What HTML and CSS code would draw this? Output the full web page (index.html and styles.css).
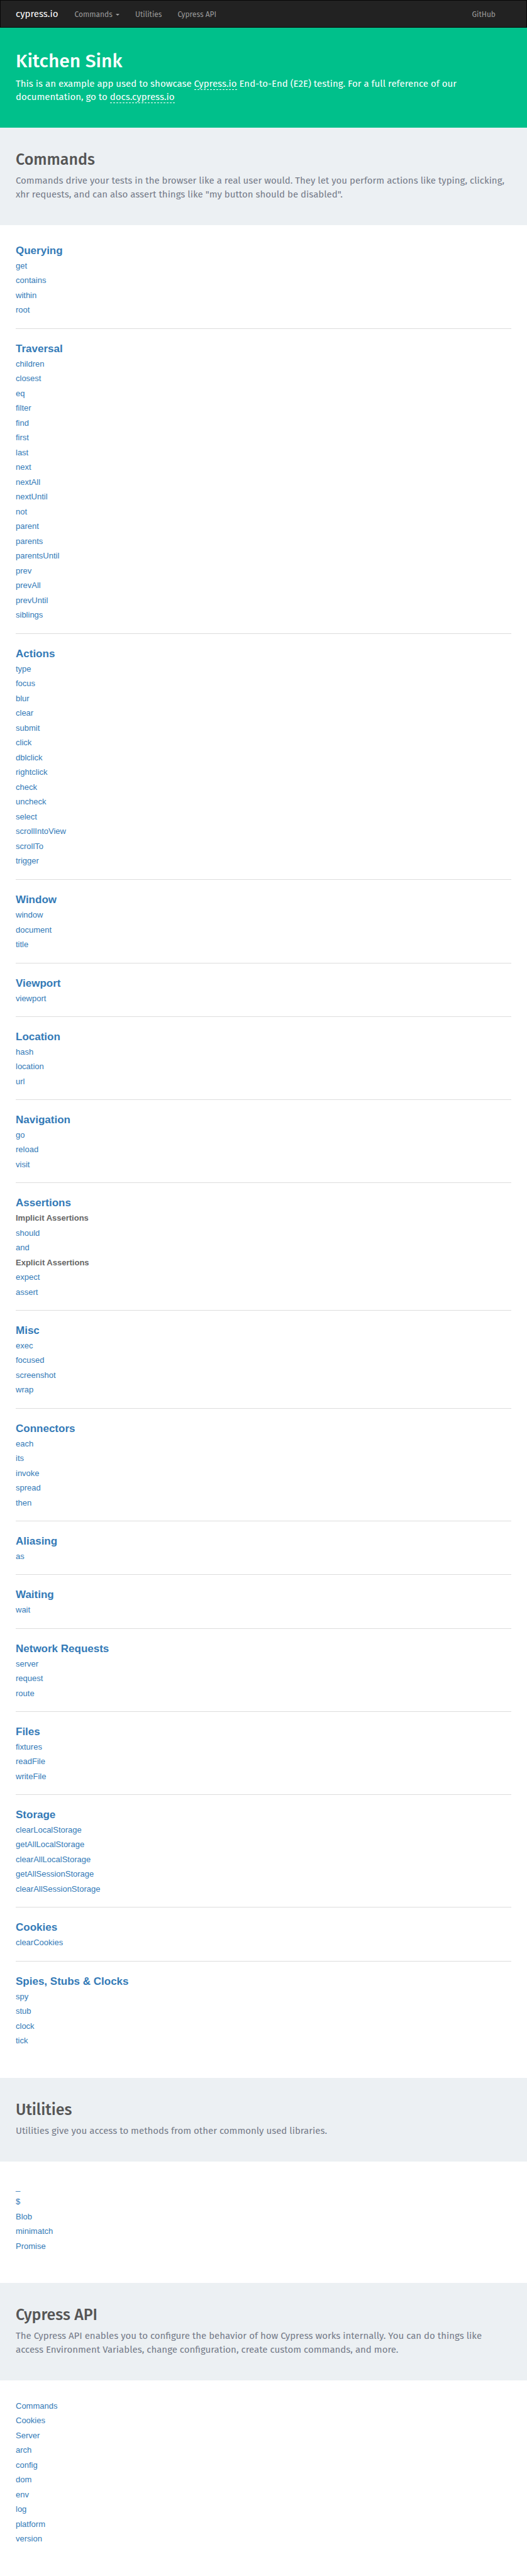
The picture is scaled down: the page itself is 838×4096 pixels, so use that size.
FILE: index.html
```html
<!DOCTYPE html>
<html lang="en">
<head>
<meta charset="utf-8">
<title>Cypress.io: Kitchen Sink</title>
<link rel="stylesheet" href="styles.css">
</head>
<body>
<nav class="navbar">
  <a class="brand" href="#">cypress.io</a>
  <ul class="nav-links">
    <li><a href="#commands">Commands <span class="caret"></span></a></li>
    <li><a href="#utilities">Utilities</a></li>
    <li><a href="#api">Cypress API</a></li>
  </ul>
  <ul class="nav-links nav-right">
    <li><a href="#">GitHub</a></li>
  </ul>
</nav>

<header class="banner hero">
  <h1>Kitchen Sink</h1>
  <p>This is an example app used to showcase <a href="#">Cypress.io</a> End-to-End (E2E) testing. For a full reference of our documentation, go to <a href="#">docs.cypress.io</a></p>
</header>

<main>
  <div class="banner" id="commands">
    <h2>Commands</h2>
    <p>Commands drive your tests in the browser like a real user would. They let you perform actions like typing, clicking, xhr requests, and can also assert things like "my button should be disabled".</p>
  </div>
  <div class="listing">
    <section class="group">
      <h3><a href="#">Querying</a></h3>
      <ul>
        <li><a href="#">get</a></li>
        <li><a href="#">contains</a></li>
        <li><a href="#">within</a></li>
        <li><a href="#">root</a></li>
      </ul>
    </section>
    <section class="group">
      <h3><a href="#">Traversal</a></h3>
      <ul>
        <li><a href="#">children</a></li>
        <li><a href="#">closest</a></li>
        <li><a href="#">eq</a></li>
        <li><a href="#">filter</a></li>
        <li><a href="#">find</a></li>
        <li><a href="#">first</a></li>
        <li><a href="#">last</a></li>
        <li><a href="#">next</a></li>
        <li><a href="#">nextAll</a></li>
        <li><a href="#">nextUntil</a></li>
        <li><a href="#">not</a></li>
        <li><a href="#">parent</a></li>
        <li><a href="#">parents</a></li>
        <li><a href="#">parentsUntil</a></li>
        <li><a href="#">prev</a></li>
        <li><a href="#">prevAll</a></li>
        <li><a href="#">prevUntil</a></li>
        <li><a href="#">siblings</a></li>
      </ul>
    </section>
    <section class="group">
      <h3><a href="#">Actions</a></h3>
      <ul>
        <li><a href="#">type</a></li>
        <li><a href="#">focus</a></li>
        <li><a href="#">blur</a></li>
        <li><a href="#">clear</a></li>
        <li><a href="#">submit</a></li>
        <li><a href="#">click</a></li>
        <li><a href="#">dblclick</a></li>
        <li><a href="#">rightclick</a></li>
        <li><a href="#">check</a></li>
        <li><a href="#">uncheck</a></li>
        <li><a href="#">select</a></li>
        <li><a href="#">scrollIntoView</a></li>
        <li><a href="#">scrollTo</a></li>
        <li><a href="#">trigger</a></li>
      </ul>
    </section>
    <section class="group">
      <h3><a href="#">Window</a></h3>
      <ul>
        <li><a href="#">window</a></li>
        <li><a href="#">document</a></li>
        <li><a href="#">title</a></li>
      </ul>
    </section>
    <section class="group">
      <h3><a href="#">Viewport</a></h3>
      <ul>
        <li><a href="#">viewport</a></li>
      </ul>
    </section>
    <section class="group">
      <h3><a href="#">Location</a></h3>
      <ul>
        <li><a href="#">hash</a></li>
        <li><a href="#">location</a></li>
        <li><a href="#">url</a></li>
      </ul>
    </section>
    <section class="group">
      <h3><a href="#">Navigation</a></h3>
      <ul>
        <li><a href="#">go</a></li>
        <li><a href="#">reload</a></li>
        <li><a href="#">visit</a></li>
      </ul>
    </section>
    <section class="group">
      <h3><a href="#">Assertions</a></h3>
      <ul>
        <li class="label">Implicit Assertions</li>
        <li><a href="#">should</a></li>
        <li><a href="#">and</a></li>
        <li class="label">Explicit Assertions</li>
        <li><a href="#">expect</a></li>
        <li><a href="#">assert</a></li>
      </ul>
    </section>
    <section class="group">
      <h3><a href="#">Misc</a></h3>
      <ul>
        <li><a href="#">exec</a></li>
        <li><a href="#">focused</a></li>
        <li><a href="#">screenshot</a></li>
        <li><a href="#">wrap</a></li>
      </ul>
    </section>
    <section class="group">
      <h3><a href="#">Connectors</a></h3>
      <ul>
        <li><a href="#">each</a></li>
        <li><a href="#">its</a></li>
        <li><a href="#">invoke</a></li>
        <li><a href="#">spread</a></li>
        <li><a href="#">then</a></li>
      </ul>
    </section>
    <section class="group">
      <h3><a href="#">Aliasing</a></h3>
      <ul>
        <li><a href="#">as</a></li>
      </ul>
    </section>
    <section class="group">
      <h3><a href="#">Waiting</a></h3>
      <ul>
        <li><a href="#">wait</a></li>
      </ul>
    </section>
    <section class="group">
      <h3><a href="#">Network Requests</a></h3>
      <ul>
        <li><a href="#">server</a></li>
        <li><a href="#">request</a></li>
        <li><a href="#">route</a></li>
      </ul>
    </section>
    <section class="group">
      <h3><a href="#">Files</a></h3>
      <ul>
        <li><a href="#">fixtures</a></li>
        <li><a href="#">readFile</a></li>
        <li><a href="#">writeFile</a></li>
      </ul>
    </section>
    <section class="group">
      <h3><a href="#">Storage</a></h3>
      <ul>
        <li><a href="#">clearLocalStorage</a></li>
        <li><a href="#">getAllLocalStorage</a></li>
        <li><a href="#">clearAllLocalStorage</a></li>
        <li><a href="#">getAllSessionStorage</a></li>
        <li><a href="#">clearAllSessionStorage</a></li>
      </ul>
    </section>
    <section class="group">
      <h3><a href="#">Cookies</a></h3>
      <ul>
        <li><a href="#">clearCookies</a></li>
      </ul>
    </section>
    <section class="group">
      <h3><a href="#">Spies, Stubs &amp; Clocks</a></h3>
      <ul>
        <li><a href="#">spy</a></li>
        <li><a href="#">stub</a></li>
        <li><a href="#">clock</a></li>
        <li><a href="#">tick</a></li>
      </ul>
    </section>
  </div>

  <div class="banner" id="utilities">
    <h2>Utilities</h2>
    <p>Utilities give you access to methods from other commonly used libraries.</p>
  </div>
  <div class="listing">
    <ul>
      <li><a href="#">_</a></li>
      <li><a href="#">$</a></li>
      <li><a href="#">Blob</a></li>
      <li><a href="#">minimatch</a></li>
      <li><a href="#">Promise</a></li>
    </ul>
  </div>

  <div class="banner" id="api">
    <h2>Cypress API</h2>
    <p>The Cypress API enables you to configure the behavior of how Cypress works internally. You can do things like access Environment Variables, change configuration, create custom commands, and more.</p>
  </div>
  <div class="listing">
    <ul>
      <li><a href="#">Commands</a></li>
      <li><a href="#">Cookies</a></li>
      <li><a href="#">Server</a></li>
      <li><a href="#">arch</a></li>
      <li><a href="#">config</a></li>
      <li><a href="#">dom</a></li>
      <li><a href="#">env</a></li>
      <li><a href="#">log</a></li>
      <li><a href="#">platform</a></li>
      <li><a href="#">version</a></li>
    </ul>
  </div>
</main>
</body>
</html>
```
FILE: styles.css
```css
* {
  box-sizing: border-box;
}

body {
  margin: 0;
  background: #fff;
  color: #666;
  font-family: "Liberation Sans", Arial, sans-serif;
  font-size: 13px;
}

a {
  color: #337ab7;
  text-decoration: none;
}

ul {
  margin: 0;
  padding: 0;
  list-style: none;
}

h1,
h2,
h3,
p {
  margin: 0;
}

.navbar,
.banner {
  font-family: "Fira Sans", "Noto Sans", sans-serif;
}

.navbar {
  display: flex;
  align-items: center;
  height: 44px;
  padding: 0 24px;
  background: #222;
  border: 1px solid #080808;
}

.brand {
  color: #fff;
  font-size: 15px;
}

.nav-links {
  display: flex;
  gap: 25px;
  margin-left: 26px;
}

.nav-links a {
  color: #9d9d9d;
  font-size: 12px;
}

.nav-right {
  margin-left: auto;
  margin-right: 25px;
}

.caret {
  display: inline-block;
  margin-left: 2px;
  vertical-align: middle;
  border-top: 3px solid;
  border-left: 3px solid transparent;
  border-right: 3px solid transparent;
}

.banner {
  padding: 35px 25px 38px;
  background: #ecf0f3;
}

.banner h2 {
  margin-bottom: 6px;
  color: #555;
  font-size: 25px;
  font-weight: 500;
  line-height: 32px;
}

.banner p {
  color: #747a88;
  font-size: 15px;
  line-height: 22px;
}

.hero {
  padding: 33px 25px 38px;
  background: #00c08b;
}

.hero h1 {
  margin-bottom: 6px;
  color: #fff;
  font-size: 30px;
  font-weight: 500;
  line-height: 40px;
}

.hero p {
  color: #fff;
  line-height: 21px;
}

.hero a {
  color: #fff;
  border-bottom: 1px dashed #fff;
}

.listing {
  padding: 29px 25px 47px;
}

.group + .group {
  margin-top: 17px;
  padding-top: 20px;
  border-top: 1px solid #ddd;
}

.group h3 {
  font-size: 17px;
  line-height: 24px;
}

.listing li {
  line-height: 23px;
}

.listing li:nth-child(even) {
  line-height: 24px;
}

.group:nth-child(4n) li:nth-child(odd) {
  line-height: 24px;
}

.group:nth-child(4n) li:nth-child(even) {
  line-height: 23px;
}

.label {
  font-weight: 700;
}
```
